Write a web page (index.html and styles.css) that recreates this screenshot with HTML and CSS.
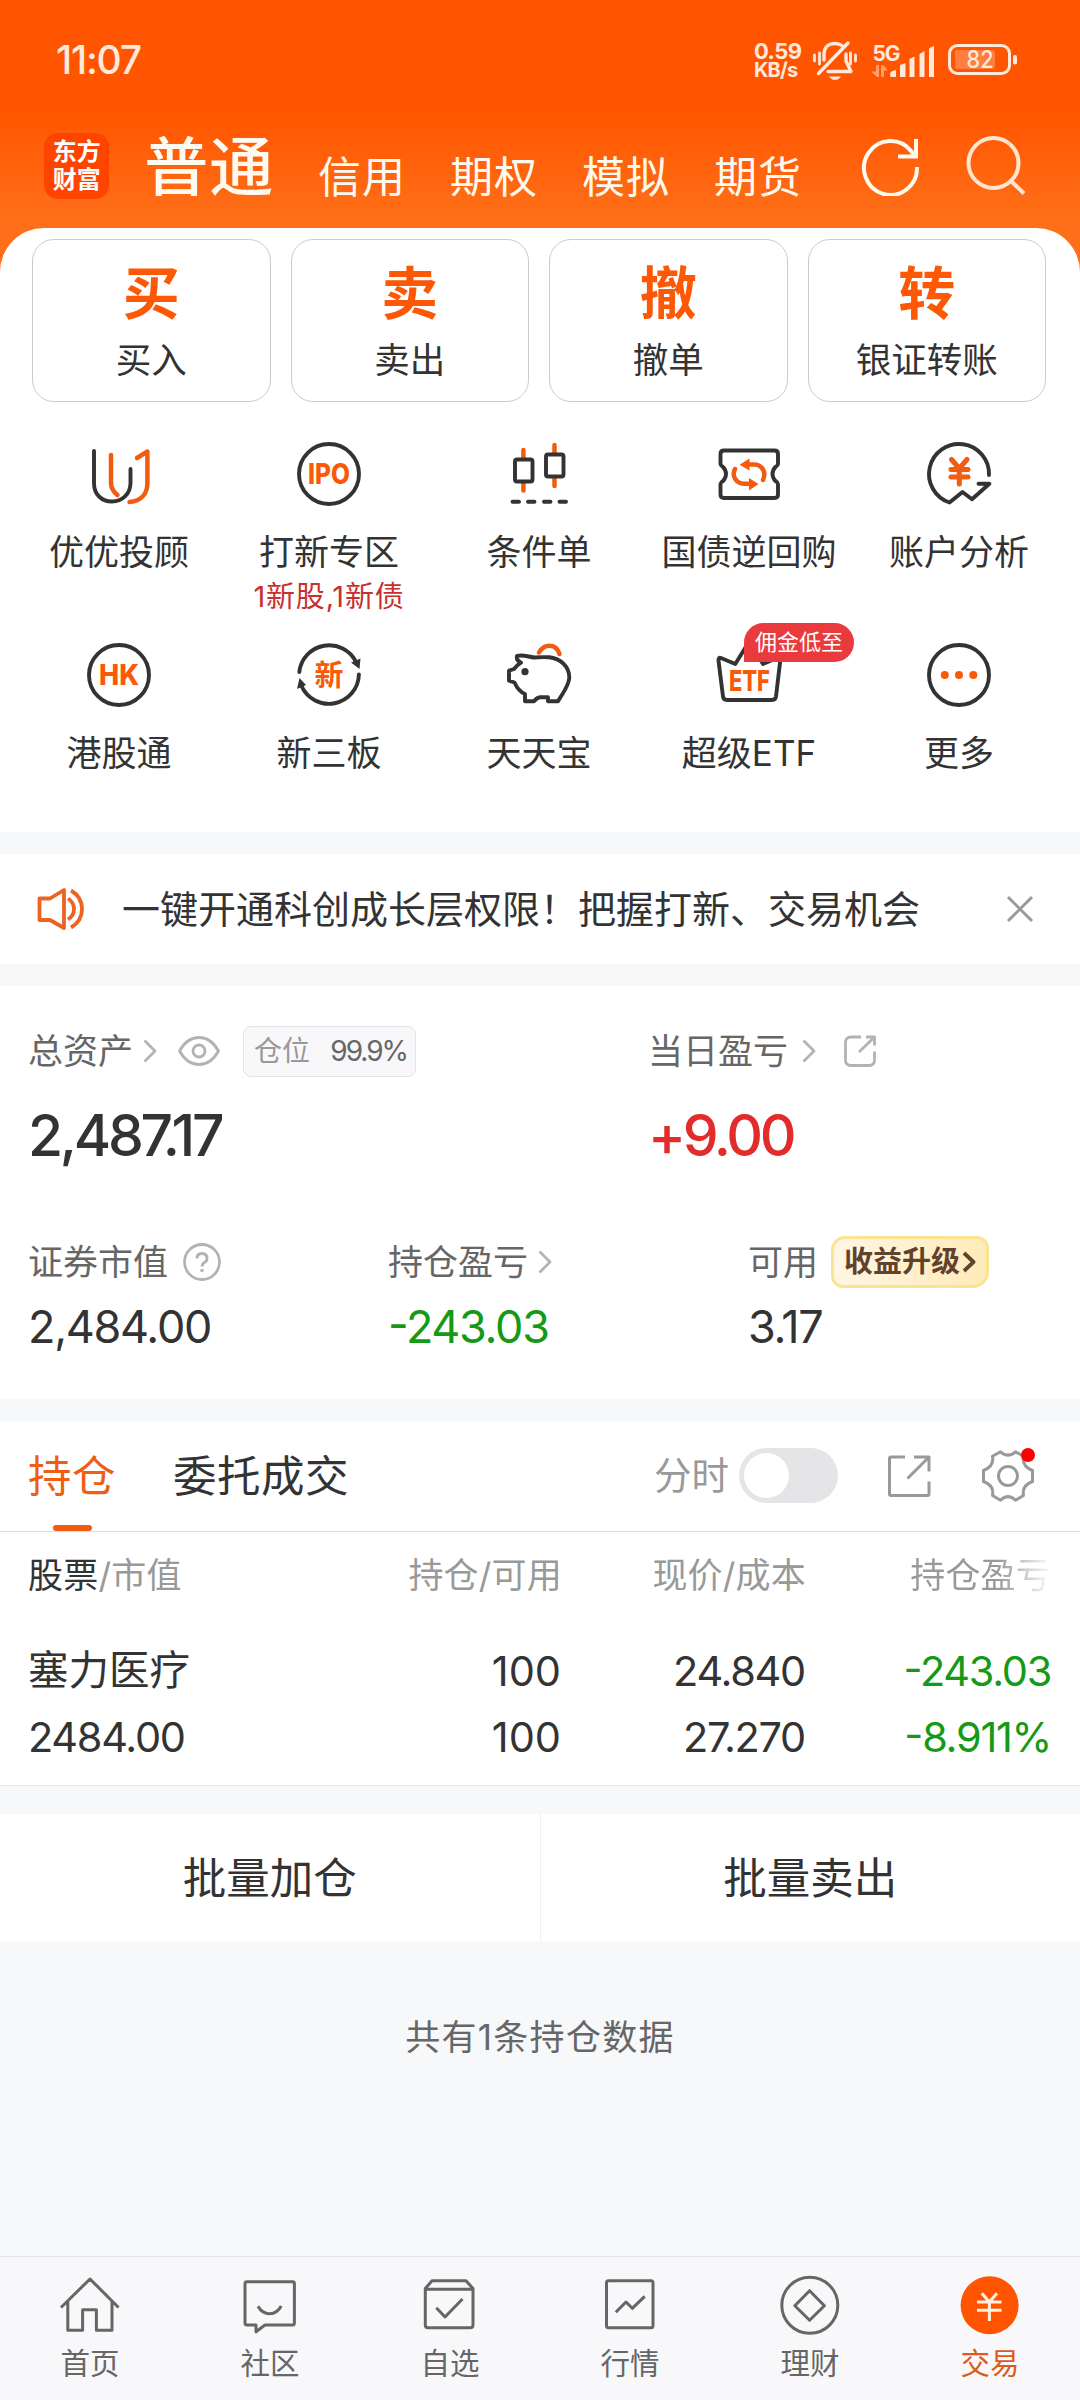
FILE: index.html
```html
<!DOCTYPE html>
<html lang="zh-CN">
<head>
<meta charset="utf-8">
<title>交易</title>
<link rel="stylesheet" href="styles.css">
</head>
<body>
<div class="page">
  <div class="status">
    <span class="clock">11:07</span>
    <div class="status-right">
      <div class="speed"><span class="speed-num">0.59</span><span class="speed-unit">KB/s</span></div>
      <svg class="bell" width="46" height="40" viewBox="0 0 46 40" fill="none" stroke="currentColor" stroke-width="3.4" stroke-linecap="round" stroke-linejoin="round">
        <path d="M12 20V14C12 7 17 3.500 23 3.500C26 3.500 28.500 4.500 30.500 6M34 14V21L39 31.500H16"/>
        <path d="M36 3L6.500 33.500"/>
        <path d="M17 36.500H29C27.500 39 25.500 39.800 23 39.800S18.500 39 17 36.500Z" fill="currentColor" stroke="none"/>
        <path d="M2.500 15V21M7.500 13V24M38.500 13V24M43.500 15V21" stroke-width="2.800"/>
      </svg>
      <svg class="signal" width="64" height="36" viewBox="0 0 64 36" fill="currentColor">
        <text x="1.500" y="18.500" class="sig-text" textLength="28">5G</text>
        <path opacity=".5" d="M5 23h3v12h-2L0 29.500h5zM10 23h2l5 5.500h-4V35h-3z"/>
        <path d="M19 32q0-3 6-4v7h-5.500zM29 23l5.500-2v14H29zM38.500 17l5-2.500V35h-5zM48.500 12l5-3V35h-5zM58 7.500q0-2 5-3.500V35h-5z"/>
      </svg>
      <svg class="battery" width="70" height="32" viewBox="0 0 70 32">
        <rect x="1.500" y="1.500" width="60" height="28" rx="8" fill="none" stroke="currentColor" stroke-width="3"/>
        <rect x="7" y="6" width="40" height="19" rx="3" fill="currentColor" opacity=".28"/>
        <rect x="65" y="11" width="4" height="9.500" rx="1.800" fill="currentColor"/>
        <text x="32" y="24.300" text-anchor="middle" class="bat-text" fill="currentColor" textLength="27" lengthAdjust="spacingAndGlyphs">82</text>
      </svg>
    </div>
  </div>

  <header class="topbar">
    <div class="logo"><span>东方</span><span>财富</span></div>
    <h1 class="mode">普通</h1>
    <nav class="modes"><span>信用</span><span>期权</span><span>模拟</span><span>期货</span></nav>
    <svg class="refresh" width="60" height="60" viewBox="0 0 60 60" fill="none" stroke="currentColor" stroke-width="4">
      <path d="M57 31A26.500 27 0 1 1 51.500 15.500L55 20"/>
      <path d="M56 3V20.500H38"/>
    </svg>
    <svg class="search" width="62" height="62" viewBox="0 0 62 62" fill="none" stroke="currentColor" stroke-width="4">
      <circle cx="29.500" cy="28" r="25"/><path d="M47 46L60 58.500"/>
    </svg>
  </header>

  <section class="sheet">
    <div class="cards">
      <div class="card"><b>买</b><span>买入</span></div>
      <div class="card"><b>卖</b><span>卖出</span></div>
      <div class="card"><b>撤</b><span>撤单</span></div>
      <div class="card"><b>转</b><span>银证转账</span></div>
    </div>
    <div class="grid">
      <div class="tool">
        <svg class="ico" viewBox="0 0 72 72"><path d="M11 13V45C11 57 19 63.500 29 63.500S47.500 56 47.500 45V31"/><path class="or" d="M28 17V45Q28 52 34.500 57M46.500 64C58 63 64.400 56 64.400 45V13.500L54 20"/></svg>
        <span>优优投顾</span>
      </div>
      <div class="tool">
        <svg class="ico" viewBox="0 0 72 72"><circle cx="36" cy="36" r="30"/><text x="36" y="46" class="ico-text" textLength="42" lengthAdjust="spacingAndGlyphs">IPO</text></svg>
        <span>打新专区</span><em>1新股,1新债</em>
      </div>
      <div class="tool">
        <svg class="ico" viewBox="0 0 72 72"><path class="or" d="M20.400 12V21M20.400 44V52.500M51.500 7V16M51.500 39V48"/><rect x="12" y="21.500" width="17.500" height="22" rx="2"/><rect x="43" y="16.500" width="17.500" height="22" rx="2"/><path d="M9.500 63.700H16M25 63.700H31.500M41 63.700H47.500M56.500 63.700H63"/></svg>
        <span>条件单</span>
      </div>
      <div class="tool">
        <svg class="ico" viewBox="0 0 72 72"><path d="M11 12.500H61.500Q65 12.500 65 16V26Q65 27.500 62.500 29Q59.500 32 59.500 36T62.500 43Q65 44.500 65 46V56.500Q65 60 61.500 60H11Q7.500 60 7.500 56.500V46Q7.500 44.500 10 43Q13 40 13 36T10 29Q7.500 27.500 7.500 26V16Q7.500 12.500 11 12.500Z"/><path class="or" d="M22 31C18.500 38 23 45.500 31 45.800H37M50 42C54 33 48 26.500 41 26.500H35"/><path class="or-fill" d="M26.500 26.700L36.500 20.500V32.500ZM45.500 46L36 40V52.500Z"/></svg>
        <span>国债逆回购</span>
      </div>
      <div class="tool">
        <svg class="ico" viewBox="0 0 72 72"><path d="M66 37A30 30 0 1 0 26.500 64.500L39.500 54L49 61.300L66.400 45.700H55.500"/><path class="or yen" d="M28.500 21.500L36.300 30.500L44 21.500M28 31.500H45M28 39H45M36.300 31V46"/></svg>
        <span>账户分析</span>
      </div>
      <div class="tool">
        <svg class="ico" viewBox="0 0 72 72"><circle cx="36" cy="36" r="30"/><text x="36" y="46" class="ico-text" textLength="40" lengthAdjust="spacingAndGlyphs">HK</text></svg>
        <span>港股通</span>
      </div>
      <div class="tool">
        <svg class="ico" viewBox="0 0 72 72"><path d="M6.300 33A30 30 0 0 1 63 23M65.900 35.500A30 30 0 0 1 8.500 47"/><path class="dark-fill" d="M58 23.500L67.500 19.500L66.500 30ZM4 50L13 46L6.500 39Z"/><text x="36" y="47" class="ico-text ico-cjk">新</text></svg>
        <span>新三板</span>
      </div>
      <div class="tool">
        <svg class="ico" viewBox="0 0 72 72"><path class="or" d="M36 13.500C41 4.500 53 4 56.500 15"/><path d="M14 16.800C21 15.500 25 17.800 31 18.500C38 18 42 18 46 18.300C58 19.500 66.300 28 66.300 38.500C66 47 60 53.500 55 62.300H45V58.300H37Q34 58.500 31 62.300H22V55Q15.500 52.500 11.500 43.500L6 41.700V31.700L11 30Q13.500 26.500 18 23.700Q13 22 14 16.800Z"/><circle class="dark-fill" cx="22" cy="32.700" r="3.600"/></svg>
        <span>天天宝</span>
      </div>
      <div class="tool">
        <div class="ico-wrap">
          <svg class="ico" viewBox="0 0 72 72"><path d="M8 19L22.300 25L34 6Q36 3 38 6L50 25L64 19Q67.500 18.500 67.200 22L63 57.500Q62.500 61 59 61H14Q10.500 61 10 57.500L5.500 21.500Q5.300 18 8 19Z"/><text x="36.400" y="52" class="ico-text" textLength="41" lengthAdjust="spacingAndGlyphs">ETF</text></svg>
          <i class="promo">佣金低至</i>
        </div>
        <span>超级ETF</span>
      </div>
      <div class="tool">
        <svg class="ico" viewBox="0 0 72 72"><circle cx="36" cy="36" r="30"/><g class="or-fill"><circle cx="21.800" cy="36" r="4"/><circle cx="36" cy="36" r="4"/><circle cx="50.300" cy="36" r="4"/></g></svg>
        <span>更多</span>
      </div>
    </div>
  </section>

  <section class="notice">
    <svg width="48" height="44" viewBox="0 0 48 44" fill="none" stroke="currentColor" stroke-width="3.800" stroke-linejoin="round"><path d="M2.500 11.500H13L27 3V41L13 33H2.500Z"/><path d="M31 11.500Q37 15.500 37 22T31 32.500M34 3.500Q45 10 45 22T34 40.500"/></svg>
    <p>一键开通科创成长层权限！把握打新、交易机会</p>
    <svg class="close" width="28" height="28" viewBox="0 0 28 28" fill="none" stroke="currentColor" stroke-width="3"><path d="M2 2L26 26M26 2L2 26"/></svg>
  </section>

  <section class="assets">
    <div class="main-row">
      <div>
        <div class="label top-label">总资产
          <svg class="chev" viewBox="0 0 14 24"><path d="M1.500 1.500L12 12L1.500 22.500"/></svg>
          <svg class="eye" width="42" height="30" viewBox="0 0 42 30"><path d="M1.500 15Q9 1.500 21 1.500T40.500 15Q33 28.500 21 28.500T1.500 15Z"/><circle cx="21" cy="15" r="6"/></svg>
          <span class="ratio"><span>仓位</span><b>99.9%</b></span>
        </div>
        <div class="big total">2,487.17</div>
      </div>
      <div>
        <div class="label top-label">当日盈亏
          <svg class="chev day" viewBox="0 0 14 24"><path d="M1.500 1.500L12 12L1.500 22.500"/></svg>
          <svg class="share" width="32" height="32" viewBox="0 0 32 32"><path d="M17 2H7Q1.500 2 1.500 7.500V25Q1.500 30.500 7 30.500H25Q30.500 30.500 30.500 25V16.500M22 2H30.500V10.500M29.500 3L15 17"/></svg>
        </div>
        <div class="big up">+9.00</div>
      </div>
    </div>
    <div class="sub-row">
      <div>
        <div class="label">证券市值<svg class="help" width="38" height="38" viewBox="0 0 38 38"><circle cx="19" cy="19" r="17.500"/><path d="M14 15.500Q14 10.500 19 10.500T24 15.500Q24 18 21.500 19.500Q19 21 19 23.500"/><circle class="dot" cx="19" cy="27.500" r="1.800"/></svg></div>
        <div class="mid">2,484.00</div>
      </div>
      <div>
        <div class="label">持仓盈亏<svg class="chev pos" viewBox="0 0 14 24"><path d="M1.500 1.500L12 12L1.500 22.500"/></svg></div>
        <div class="mid down"><i class="sign">-</i>243.03</div>
      </div>
      <div>
        <div class="label">可用<span class="upgrade">收益升级<svg width="14" height="22" viewBox="0 0 14 22"><path d="M2 2L11.500 11L2 20"/></svg></span></div>
        <div class="mid cash">3.17</div>
      </div>
    </div>
  </section>

  <section class="holdings">
    <div class="tabs">
      <span class="tab active">持仓</span>
      <span class="tab">委托成交</span>
      <div class="tab-tools">
        <span class="trend">分时</span>
        <span class="toggle"><i></i></span>
        <svg class="export" width="44" height="44" viewBox="0 0 44 44"><path d="M18 3H4Q2.500 3 2.500 4.500V40Q2.500 41.500 4 41.500H40.500Q42 41.500 42 40V27.500M27 3H42V17.500M41 4L20.500 24.500"/></svg>
        <span class="gear"><svg width="52" height="52" viewBox="0 0 52 52"><path d="M18.500 1.800Q26 8.500 33.500 1.800L41.500 6.200Q39.500 16 50.500 20.500V31.500Q39.500 35.500 41.500 45.500L33.500 50.200Q26 43 18.500 50.200L10.500 45.500Q12.500 35.500 1.500 31.500V20.500Q12.500 16 10.500 6.200Z"/><circle cx="26" cy="26" r="9.500"/></svg><i></i></span>
      </div>
    </div>
    <div class="row head"><span><b>股票</b>/市值</span><span>持仓/可用</span><span>现价/成本</span><span class="fade">持仓盈亏</span></div>
    <div class="rows">
      <div class="row"><span class="name">塞力医疗</span><span class="qty">100</span><span>24.840</span><span class="down"><i class="sign">-</i>243.03</span></div>
      <div class="row"><span>2484.00</span><span class="qty">100</span><span>27.270</span><span class="down"><i class="sign">-</i>8.911%</span></div>
    </div>
  </section>

  <section class="batch"><span>批量加仓</span><span>批量卖出</span></section>
  <p class="count">共有1条持仓数据</p>

  <footer class="nav">
    <div><svg viewBox="0 0 64 64"><path d="M3 34.500L32 6L60.500 34.500M9.800 28.500V57.300H24.600V36.700H38.400V57.300H54V28.500"/></svg><span>首页</span></div>
    <div><svg viewBox="0 0 64 64"><path d="M9 8.700H54.500Q56.400 8.700 56.400 10.600V50Q56.400 52 54.500 52H27L18 58.800V52H9Q7 52 7 50V10.600Q7 8.700 9 8.700ZM20 33.300Q24 40.700 31.600 40.700T43.200 33"/></svg><span>社区</span></div>
    <div><svg viewBox="0 0 64 64"><path d="M7.300 16.300H55V52Q55 54.700 52.300 54.700H10Q7.300 54.700 7.300 52V15.500L14 7.700H48L55 15.500V17M18.300 34.700L27 44L44.500 26"/></svg><span>自选</span></div>
    <div><svg viewBox="0 0 64 64"><rect x="8.500" y="7.700" width="46.500" height="47" rx="2"/><path d="M17.800 39.300L28 29L34.300 35.300L46.700 23.300"/></svg><span>行情</span></div>
    <div><svg viewBox="0 0 64 64"><circle cx="31.800" cy="32.300" r="28"/><path d="M31.600 17.700L46.400 32.700L31.600 47.300L16.800 32.700Z"/></svg><span>理财</span></div>
    <div class="on"><svg viewBox="0 0 64 64"><circle class="disc" cx="31.600" cy="32.300" r="29"/><path d="M23.800 20.300L31.400 29L39 20.300M19 29H43.500M19 37.300H43.500M31.400 29V48"/></svg><span>交易</span></div>
  </footer>
</div>
</body>
</html>
```
FILE: styles.css
```css
* { box-sizing: border-box; margin: 0; padding: 0; }
body {
  font-family: Inter, "Noto Sans CJK SC", sans-serif;
  font-size: 35px;
  color: #333;
}
i, em { font-style: normal; }
b, h1 { font-weight: inherit; }
svg { flex: none; display: block; }

.page {
  width: 1080px;
  height: 2400px;
  overflow: hidden;
  display: flex;
  flex-direction: column;
  background: linear-gradient(#ff5500 0, #ff5500 110px, #ff6e18 215px, #ff6e18 290px, #f7f8fa 290px);
}

/* system status bar */
.status {
  height: 120px;
  padding: 0 62px 0 56px;
  display: flex;
  align-items: center;
  justify-content: space-between;
  color: #ffe9dc;
}
.clock { font-size: 39px; font-weight: 500; letter-spacing: -1.2px; line-height: 60px; }
.status-right { display: flex; align-items: center; }
.speed { display: flex; flex-direction: column; width: 49px; margin-right: 9px; font-weight: 700; white-space: nowrap; }
.speed-num { font-size: 22px; line-height: 20px; letter-spacing: -0.6px; }
.speed-unit { font-size: 20px; line-height: 19px; letter-spacing: -0.8px; }
.bell { margin-right: 13px; }
.signal { margin-right: 13px; }
.sig-text { font-size: 21px; font-weight: 700; }
.bat-text { font-size: 24px; font-weight: 500; }

/* account type header */
.topbar { height: 108px; display: flex; padding: 13px 54px 0 44px; color: #fffaf0; }
.logo {
  width: 66px;
  height: 66px;
  border-radius: 14px;
  background: #ff4400;
  display: flex;
  flex-direction: column;
  align-items: center;
  justify-content: center;
  font-size: 24px;
  line-height: 28px;
  font-weight: 700;
  color: #fff;
}
.mode { margin-left: 35px; width: 132px; font-size: 64px; font-weight: 500; line-height: 68px; letter-spacing: 1px; white-space: nowrap; }
.modes { display: flex; flex: none; margin-left: 43px; gap: 44px; padding-top: 14px; font-size: 43px; line-height: 60px; letter-spacing: 1px; white-space: nowrap; }
.refresh { margin: 3px 0 0 58px; }
.search { margin: 2px 0 0 44px; color: #ffe4d0; }

/* white sheet with trade shortcuts */
.sheet { height: 604px; border-radius: 44px 44px 0 0; background: #fff; padding-top: 11px; }
.cards { display: flex; gap: 20px; padding: 0 34px 0 32px; }
.card {
  flex: 1;
  height: 163px;
  border: 1px solid #ccc;
  border-radius: 22px;
  display: flex;
  flex-direction: column;
  align-items: center;
  padding-top: 24px;
}
.card b { font-size: 57px; line-height: 60px; font-weight: 700; color: #fc5806; }
.card span { margin-top: 12px; font-size: 35.5px; line-height: 50px; }
.grid { display: grid; grid-template-columns: repeat(5, 210px); grid-template-rows: 201px 193px; padding: 36px 16px 0 14px; }
.tool { display: flex; flex-direction: column; align-items: center; }
.tool > span { margin-top: 20px; line-height: 44px; white-space: nowrap; }
.tool em { margin-top: 5px; font-size: 29px; line-height: 36px; color: #c8302e; letter-spacing: 0.8px; }
.ico { width: 72px; height: 72px; fill: none; stroke: #333; stroke-width: 3.9px; stroke-linecap: round; stroke-linejoin: round; }
.ico .or { stroke: #f25c10; stroke-width: 4.5px; }
.ico .yen { stroke-width: 5px; }
.ico .or-fill { fill: #fa5a08; stroke: none; }
.ico .dark-fill { fill: #333; stroke: none; }
.ico .ico-text { fill: #fa5a08; stroke: none; font-size: 28px; font-weight: 800; text-anchor: middle; }
.ico .ico-cjk { font-size: 29px; font-weight: 700; }
.ico-wrap { position: relative; }
.promo {
  position: absolute;
  left: 31px;
  top: -16px;
  width: 110px;
  height: 39px;
  border-radius: 20px 20px 20px 0;
  background: #e93b3d;
  color: #fff;
  font-size: 22px;
  line-height: 39px;
  text-align: center;
}

/* announcement */
.notice { margin: 22px 0; height: 110px; background: #fff; display: flex; align-items: center; padding: 0 46px 0 37px; color: #ef6322; }
.notice p { flex: 1; margin-left: 37px; font-size: 38px; line-height: 60px; color: #333; white-space: nowrap; }
.close { color: #999; }

/* assets */
.assets { height: 413px; background: #fff; padding: 39px 28px 0; }
.main-row { display: grid; grid-template-columns: 620px 1fr; }
.sub-row { display: grid; grid-template-columns: 360px 360px 1fr; margin-top: 70px; }
.label { display: flex; align-items: center; height: 52px; line-height: 50px; color: #666; white-space: nowrap; }
.label svg { fill: none; stroke: #b3b3b3; stroke-width: 2.8px; stroke-linejoin: round; }
.label .chev { width: 14px; height: 24px; margin-left: 10px; }
.label .chev.day { margin-left: 14px; }
.label .chev.pos { margin-left: 10px; }
.label .eye { margin-left: 21px; }
.label .share { margin-left: 28px; }
.label .help { margin-left: 15px; }
.label .help .dot { fill: #b3b3b3; stroke: none; }
.ratio {
  display: flex;
  align-items: center;
  justify-content: space-between;
  margin-left: 23px;
  width: 173px;
  height: 51px;
  padding: 0 8px 0 10px;
  border: 1px solid #e3e4e6;
  border-radius: 8px;
  background: #f8f8fa;
  font-size: 28px;
  color: #999;
}
.ratio b { color: #666; letter-spacing: -2px; }
.big { height: 60px; margin-top: 29px; font-size: 57px; line-height: 60px; font-weight: 500; letter-spacing: -3.3px; }
.mid { height: 54px; margin-top: 12px; font-size: 45px; line-height: 54px; letter-spacing: -1.3px; }
.up { color: #e22b2b; }
.down { color: #149a14; }
.sign { position: relative; top: -3px; }
.upgrade {
  display: flex;
  align-items: center;
  gap: 2px;
  margin-left: 13px;
  height: 52px;
  line-height: 46px;
  width: 158px;
  padding-left: 10px;
  border: 3px solid #f9e492;
  border-radius: 14px 12px 16px 12px;
  background: linear-gradient(100deg, #fff6e6, #ffeab8);
  color: #62422a;
  font-size: 29px;
  font-weight: 700;
}
.label .upgrade svg { stroke: #62422a; stroke-width: 3.8px; }

/* holdings */
.holdings { margin-top: 22px; background: #fff; height: 365px; border-bottom: 1px solid #e6e8ea; }
.tabs { height: 111px; border-bottom: 1px solid #dcdcde; display: flex; align-items: center; padding: 0 46px 1px 28px; }
.tab { position: relative; font-size: 43.5px; line-height: 60px; letter-spacing: 0.5px; margin-right: 57px; }
.tab.active { color: #ee5e14; }
.tab.active::after { content: ""; position: absolute; left: 25px; top: 79px; width: 39px; height: 6px; border-radius: 3px; background: #f25c10; }
.tab-tools { margin-left: auto; display: flex; align-items: center; color: #999; font-size: 37.5px; line-height: 50px; }
.tab-tools svg { fill: none; stroke: #999; stroke-width: 3px; stroke-linejoin: round; }
.toggle { width: 99px; height: 55px; border-radius: 28px; background: #e5e5e7; margin-left: 10px; padding: 5px; }
.toggle i { display: block; width: 45px; height: 45px; border-radius: 50%; background: #fff; }
.export { margin-left: 49px; }
.gear { position: relative; margin-left: 51px; }
.gear i { position: absolute; right: -1px; top: -2px; width: 14px; height: 14px; border-radius: 50%; background: #f00; }
.row { display: grid; grid-template-columns: 298px 236px 244px 1fr; padding: 0 28px 0 28px; font-size: 41.5px; line-height: 66px; letter-spacing: -1.3px; white-space: nowrap; }
.row > span:not(:first-child) { text-align: right; padding-right: 1px; }
.row > .qty { letter-spacing: 0; }
.row .name { font-size: 40.5px; letter-spacing: 0; }
.row.head { grid-template-columns: 299px 236px 244px 1fr; font-size: 35px; line-height: 87px; color: #999; letter-spacing: 0.2px; }
.row.head b { color: #333; }
.row.head .fade { color: transparent; background: linear-gradient(90deg, #999 190px, #f4f4f4 240px); background-clip: text; -webkit-background-clip: text; }
.rows { padding-top: 19px; }

.batch { margin-top: 28px; height: 127px; background: #fff; display: flex; }
.batch span { flex: 1; text-align: center; font-size: 43.5px; line-height: 128px; }
.batch span + span { border-left: 1px solid #eef0f2; }
.count { margin-top: 66px; text-align: center; font-size: 35px; line-height: 60px; letter-spacing: 1.3px; color: #666; }

/* bottom navigation */
.nav { margin-top: auto; height: 144px; border-top: 1px solid #e2e3e5; background: #f8f8fa; display: flex; }
.nav div { flex: 1; display: flex; flex-direction: column; align-items: center; padding-top: 16px; color: #666; font-size: 29.5px; }
.nav svg { width: 64px; height: 64px; fill: none; stroke: #666; stroke-width: 3px; stroke-linejoin: round; }
.nav span { margin-top: 8px; line-height: 36px; }
.nav .on { color: #dd5a1c; }
.nav .on svg { stroke: #fff0e0; }
.nav .disc { fill: #ff5500; stroke: none; }
```
